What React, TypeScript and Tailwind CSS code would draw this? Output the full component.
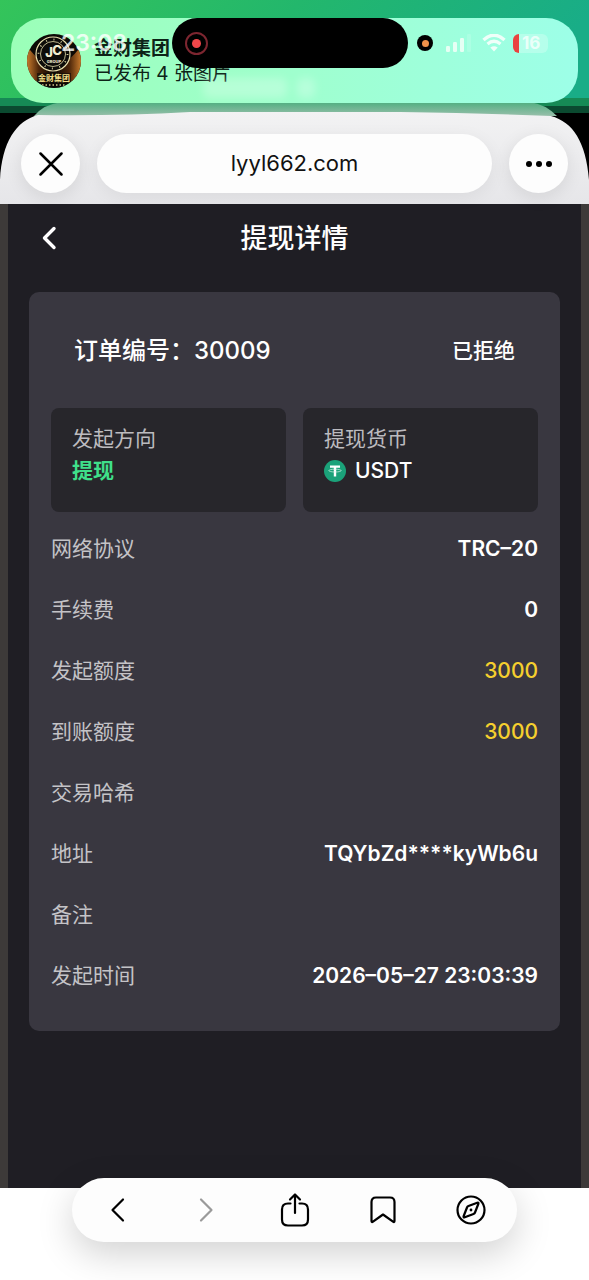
import type { ReactNode } from 'react'

const font =
  "font-['Inter','Noto_Sans_CJK_SC',sans-serif] antialiased"

const rows = [
  { label: '网络协议', value: 'TRC–20' },
  { label: '手续费', value: '0' },
  { label: '发起额度', value: '3000', highlight: true },
  { label: '到账额度', value: '3000', highlight: true },
  { label: '交易哈希', value: '' },
  { label: '地址', value: 'TQYbZd****kyWb6u' },
  { label: '备注', value: '' },
  { label: '发起时间', value: '2026–05–27 23:03:39' },
]

function GroupAvatar() {
  return (
    <svg viewBox="0 0 54 54" className="size-[54px] shrink-0" aria-hidden="true">
      <defs>
        <clipPath id="avatar">
          <circle cx="27" cy="27" r="27" />
        </clipPath>
        <linearGradient id="glow" x1="0" x2="1" y1="0" y2="0">
          <stop offset="0" stopColor="#c77a2c" />
          <stop offset="0.22" stopColor="#4a2409" />
          <stop offset="0.5" stopColor="#0b0805" />
          <stop offset="0.78" stopColor="#4a2409" />
          <stop offset="1" stopColor="#c77a2c" />
        </linearGradient>
      </defs>
      <g clipPath="url(#avatar)">
        <rect width="54" height="54" fill="#0c0906" />
        <path d="M0 12 Q27 50 54 12 V44 Q27 56 0 44 Z" fill="url(#glow)" />
        <circle cx="26" cy="20" r="17" fill="#0d0b09" stroke="#e9dfae" strokeWidth="1.2" />
        <circle cx="26" cy="20" r="14.5" fill="none" stroke="#d8cf9f" strokeWidth="1.8" strokeDasharray="1 6.6" />
        <circle cx="26" cy="20" r="12.5" fill="none" stroke="#e9dfae" strokeWidth="0.8" />
        <text x="22" y="23" textAnchor="middle" fontSize="13" fontWeight="800" fill="#f2ecd0">J</text>
        <text x="30" y="21" textAnchor="middle" fontSize="13" fontWeight="800" fill="#f2ecd0">C</text>
        <text x="27" y="28.5" textAnchor="middle" fontSize="4" fontWeight="800" fill="#f2ecd0">GROUP</text>
        <rect x="10" y="39" width="34" height="15" fill="#0c0906" opacity="0.6" />
        <text x="27" y="47" textAnchor="middle" fontSize="8" fontWeight="700" fill="#f3e08c">金财集团</text>
        <path d="M15 51 H39" stroke="#d9c98c" strokeWidth="1.4" strokeDasharray="1.5 2" />
      </g>
    </svg>
  )
}

function StatusBar() {
  return (
    <div className="absolute top-[18px] right-[9px] left-0 flex h-[50px] items-center">
      <div className="flex flex-1 justify-center pl-4 text-[23px] font-semibold text-white/80">
        23:08
      </div>
      <div className="flex h-full w-[236px] items-center rounded-full bg-black pl-[13px]">
        <span className="flex size-[23px] items-center justify-center rounded-full border-2 border-[#7d2630]">
          <span className="size-[9px] rounded-full bg-[#f0474a]" />
        </span>
      </div>
      <div className="flex flex-1 items-center pr-[7px] pl-[9px]">
        <span className="flex size-4 items-center justify-center rounded-full bg-black">
          <span className="size-[7px] rounded-full bg-[#f0924a]" />
        </span>
        <svg viewBox="0 0 26 18" className="ml-[13px] h-[18px] w-[26px]" aria-hidden="true">
          <rect x="0" y="12" width="4" height="6" rx="1.2" fill="#e6fff4" />
          <rect x="7" y="8" width="4" height="10" rx="1.2" fill="#e6fff4" />
          <rect x="14" y="4" width="4" height="14" rx="1.2" fill="#e6fff4" />
          <rect x="21" y="0" width="4" height="18" rx="1.2" fill="#fff" opacity="0.15" />
        </svg>
        <svg viewBox="0 0 24 18" className="ml-[10px] h-[18px] w-6" fill="none" aria-hidden="true">
          <path d="M1.5 6 Q12 -3.5 22.5 6" stroke="#effff9" strokeWidth="3.4" />
          <path d="M5.5 10 Q12 4.5 18.5 10" stroke="#effff9" strokeWidth="3.2" />
          <path d="M12 17.5 L8.3 13.5 Q12 10.8 15.7 13.5 Z" fill="#effff9" />
        </svg>
        <span className="ml-[7px] flex h-[19px] w-[35px] items-center overflow-hidden rounded-md bg-white/25">
          <span className="h-full w-[6px] bg-[#e8433f]" />
          <span className="flex-1 pl-[3px] text-[17px] leading-[19px] font-bold text-[#eafff9]">16</span>
        </span>
      </div>
    </div>
  )
}

function TopArea() {
  return (
    <div className="relative h-[116px]">
      <svg
        viewBox="0 0 589 204"
        preserveAspectRatio="none"
        className="absolute inset-x-0 top-0 h-[204px] w-full"
        aria-hidden="true"
      >
        <defs>
          <linearGradient id="wall" x1="0" x2="1" y1="0" y2="0.15">
            <stop offset="0" stopColor="#34c45a" />
            <stop offset="0.5" stopColor="#23b76c" />
            <stop offset="1" stopColor="#19ad87" />
          </linearGradient>
          <linearGradient id="back" x1="0" x2="0" y1="0" y2="1">
            <stop offset="0" stopColor="#4fae80" />
            <stop offset="1" stopColor="#98bfaa" />
          </linearGradient>
          <linearGradient id="sheet" x1="0" x2="0" y1="0" y2="1">
            <stop offset="0" stopColor="#f2f2f3" />
            <stop offset="1" stopColor="#e6e6e9" />
          </linearGradient>
        </defs>
        <rect width="589" height="204" fill="#000" />
        <rect width="589" height="99" fill="url(#wall)" />
        <path d="M0 98 H589 V106 H0 Z" fill="#168a55" />
        <path d="M0 106 H589 V113 H0 Z" fill="#0b4a30" />
        <path d="M34 116 Q44 104 62 102 H530 Q545 104 557 116 Z" fill="url(#back)" />
        <path d="M0 204 V180 C2 142 16 121 38 115 Q120 116 190 112 H400 Q480 113 551 116 C573 122 586 142 589 180 V204 Z" fill="url(#sheet)" />
      </svg>
      <div className="absolute inset-x-[11px] top-[18px] flex h-[85px] items-center overflow-hidden rounded-[32px] bg-linear-to-r from-[#9bffb8] via-[#9fffce] to-[#9dffe8] pl-4">
        <GroupAvatar />
        <div className="ml-[13px] text-[19px] leading-[25px] text-[#0d2317]">
          <p className="font-bold">金财集团</p>
          <p>已发布 4 张图片</p>
        </div>
        <span className="absolute top-[60px] left-[192px] h-5 w-[84px] rounded-md bg-white/25 blur-[4px]" />
        <span className="absolute top-[60px] left-[286px] h-5 w-[18px] rounded-md bg-white/25 blur-[4px]" />
      </div>
      <StatusBar />
    </div>
  )
}

function AddressBar() {
  const round =
    'flex size-[59px] shrink-0 items-center justify-center rounded-full bg-[#fdfdfd] shadow-[0_4px_18px_rgba(0,0,0,0.09)]'
  return (
    <div className="relative flex h-[88px] items-center gap-[17px] px-[21px] pt-[7px]">
      <button className={round} aria-label="关闭">
        <svg viewBox="0 0 24 24" className="size-6" fill="none" stroke="#000" strokeWidth="2.5" strokeLinecap="round" aria-hidden="true">
          <path d="M1.5 1.5 L22.5 22.5 M22.5 1.5 L1.5 22.5" />
        </svg>
      </button>
      <button className="h-[59px] flex-1 rounded-full bg-[#fdfdfd] text-[22px] text-[#111] shadow-[0_4px_18px_rgba(0,0,0,0.06)]">
        lyyl662.com
      </button>
      <button className={round} aria-label="更多">
        <svg viewBox="0 0 28 8" className="h-2 w-7" aria-hidden="true">
          <circle cx="4" cy="4" r="3" />
          <circle cx="14" cy="4" r="3" />
          <circle cx="24" cy="4" r="3" />
        </svg>
      </button>
    </div>
  )
}

function InfoBox({ label, children }: { label: string; children: ReactNode }) {
  return (
    <div className="flex-1 rounded-lg bg-[#27262b] px-[21px] pt-[15px] pb-[25px] text-[21px] leading-8">
      <p className="text-[#bcbbbf]">{label}</p>
      {children}
    </div>
  )
}

function TetherIcon() {
  return (
    <svg viewBox="0 0 22 22" className="size-[22px]" aria-hidden="true">
      <circle cx="11" cy="11" r="11" fill="#1ba27a" />
      <path d="M6 5.5 H16 V7.8 H12.2 V16.5 H9.8 V7.8 H6 Z" fill="#fff" />
      <ellipse cx="11" cy="10.6" rx="6.2" ry="1.4" fill="none" stroke="#d5f3e8" strokeWidth="0.7" />
    </svg>
  )
}

function OrderDetail() {
  return (
    <main className="flex-1 border-x-8 border-[#3d3a39] bg-[#1f1e24] px-[21px] text-white">
      <header className="relative flex h-[68px] items-center justify-center">
        <button className="absolute left-2 flex size-6 items-center justify-center" aria-label="返回">
          <svg viewBox="0 0 16 24" className="h-6 w-4" fill="none" stroke="#fff" strokeWidth="3.4" strokeLinecap="round" strokeLinejoin="round" aria-hidden="true">
            <path d="M13 2.5 L3.5 12 L13 21.5" />
          </svg>
        </button>
        <h1 className="pt-[2px] text-[27px] font-medium">提现详情</h1>
      </header>

      <section className="mt-5 rounded-[10px] bg-[#393740] px-[22px] pb-[25px]">
        <div className="flex h-[116px] items-center justify-between px-[23px] pt-[2px] font-medium">
          <h2 className="text-2xl">订单编号：30009</h2>
          <span className="text-[21px]">已拒绝</span>
        </div>
        <div className="mb-[6px] flex gap-[17px]">
          <InfoBox label="发起方向">
            <p className="font-bold text-[#3fe08a]">提现</p>
          </InfoBox>
          <InfoBox label="提现货币">
            <p className="flex items-center gap-[9px] font-medium">
              <TetherIcon />
              USDT
            </p>
          </InfoBox>
        </div>
        <dl>
          {rows.map(({ label, value, highlight }) => (
            <div key={label} className="flex h-[61px] items-center justify-between text-[21px]">
              <dt className="text-[#c4c3c7]">{label}</dt>
              <dd className={highlight ? 'font-medium text-[#f5cf2e]' : 'font-semibold'}>{value}</dd>
            </div>
          ))}
        </dl>
      </section>
    </main>
  )
}

function Tool({ label, children }: { label: string; children: ReactNode }) {
  return (
    <button aria-label={label} className="flex h-full flex-1 items-center justify-center">
      <svg viewBox="0 0 36 36" className="size-9" fill="none" stroke="#000" strokeWidth="2.2" strokeLinecap="round" strokeLinejoin="round" aria-hidden="true">
        {children}
      </svg>
    </button>
  )
}

function Toolbar() {
  return (
    <nav className="relative mx-[72px] -mt-[10px] mb-[38px] flex h-16 rounded-full bg-[#fdfdfd] px-[2px] shadow-[0_12px_36px_rgba(0,0,0,0.18)]">
      <Tool label="后退">
        <path d="M23 7.5 L12.5 18 L23 28.5" />
      </Tool>
      <Tool label="前进">
        <path d="M13 7.5 L23.5 18 L13 28.5" stroke="#9a9a9a" />
      </Tool>
      <Tool label="分享">
        <path d="M13.5 11.5 H11 Q5 11.5 5 17.5 V27.5 Q5 33.5 11 33.5 H25 Q31 33.5 31 27.5 V17.5 Q31 11.5 25 11.5 H22.5" />
        <path d="M18 21 V2.5 M13 7.5 L18 2.5 L23 7.5" />
      </Tool>
      <Tool label="书签">
        <path d="M6.5 29 V10 Q6.5 5.5 11 5.5 H25 Q29.5 5.5 29.5 10 V29 Q29.5 30.8 28 29.6 L18 22.5 L8 29.6 Q6.5 30.8 6.5 29 Z" />
      </Tool>
      <Tool label="浏览">
        <circle cx="18" cy="18" r="13.5" />
        <path d="M24.2 10.8 Q26 10.2 25.3 12 L22 20.5 Q21.6 21.6 20.5 22 L11.8 25.2 Q10 25.8 10.7 24 L14 15.5 Q14.4 14.4 15.5 14 Z" />
        <circle cx="18" cy="18" r="1.4" fill="#000" stroke="none" />
      </Tool>
    </nav>
  )
}

export default function App() {
  return (
    <div className={`flex min-h-screen flex-col overflow-hidden bg-white ${font}`}>
      <TopArea />
      <AddressBar />
      <OrderDetail />
      <Toolbar />
    </div>
  )
}
